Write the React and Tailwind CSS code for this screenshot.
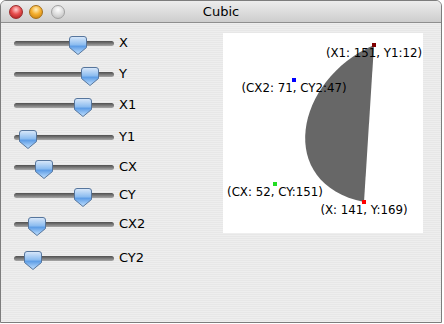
const sliders = [
  { label: "X", pos: 77, mt: "mt-[13px]" },
  { label: "Y", pos: 89, mt: "mt-[13px]" },
  { label: "X1", pos: 82, mt: "mt-[13px]" },
  { label: "Y1", pos: 27, mt: "mt-[14px]" },
  { label: "CX", pos: 43, mt: "mt-[12px]" },
  { label: "CY", pos: 82, mt: "mt-[10px]" },
  { label: "CX2", pos: 36, mt: "mt-[11px]" },
  { label: "CY2", pos: 32, mt: "mt-[16px]" },
]

const points = [
  { x: 141, y: 169, color: "#ff0000", text: "(X: 141, Y:169)" },
  { x: 151, y: 12, color: "#800000", text: "(X1: 151, Y1:12)" },
  { x: 52, y: 151, color: "#22dd22", text: "(CX: 52, CY:151)" },
  { x: 71, y: 47, color: "#0000ff", text: "(CX2: 71, CY2:47)" },
]

// pos is the thumb centre in window pixels; the track starts at x=13
function Thumb({ pos }) {
  return (
    <svg
      width="18"
      height="19"
      viewBox="0 0 18 19"
      className="absolute top-0"
      style={{ left: pos - 13 - 9 }}
    >
      <defs>
        <linearGradient id="aqua" x1="0" y1="0" x2="0" y2="1">
          <stop offset="0" stopColor="#dbe9fa" />
          <stop offset="0.45" stopColor="#8dbdf0" />
          <stop offset="0.55" stopColor="#5f9ee6" />
          <stop offset="1" stopColor="#c4e2ff" />
        </linearGradient>
      </defs>
      <path
        d="M3 0.5 H15 Q17.5 0.5 17.5 3 V11.5 L9 18.5 L0.5 11.5 V3 Q0.5 0.5 3 0.5 Z"
        fill="url(#aqua)"
        stroke="#56759c"
        strokeWidth="1"
      />
    </svg>
  )
}

function SliderRow({ label, pos, mt }) {
  return (
    <div className={`flex items-start h-[18px] ${mt}`}>
      <div className="relative w-[100px] h-[18px] ml-[13px]">
        <div className="absolute left-0 right-0 top-[5px] h-[5px] rounded-full bg-gradient-to-b from-[#4f4f4f] to-[#a8a8a8]" />
        <Thumb pos={pos} />
      </div>
      <span className="ml-[5px] leading-[14px] text-[13px] text-black">{label}</span>
    </div>
  )
}

export default function App() {
  return (
    <div className="w-[444px] h-[324px] bg-white" style={{ fontFamily: '"DejaVu Sans", "Liberation Sans", sans-serif' }}>
      <div className="w-[442px] h-[323px] border border-[#7d7d7d] rounded-t-[6px] overflow-hidden flex flex-col bg-[repeating-linear-gradient(0deg,#eeeeee_0px,#eeeeee_1px,#e7e7e7_1px,#e7e7e7_2px)]">
        <div className="relative h-[22px] shrink-0 flex items-center justify-center bg-gradient-to-b from-[#ededed] to-[#cdcdcd] border-b border-[#8f8f8f]">
          <div className="absolute left-[8px] top-[4px] flex gap-[6px]">
            <div className="w-[14px] h-[14px] rounded-full border border-[#9a2b2b] bg-[radial-gradient(circle_at_50%_30%,#ffd0d0_0%,#e85050_45%,#a01818_100%)]" />
            <div className="w-[14px] h-[14px] rounded-full border border-[#a5701a] bg-[radial-gradient(circle_at_50%_30%,#fff0c0_0%,#f5b030_45%,#c07808_100%)]" />
            <div className="w-[14px] h-[14px] rounded-full border border-[#a0a0a0] ml-[2px] bg-[radial-gradient(circle_at_50%_30%,#ffffff_0%,#dcdcdc_50%,#b8b8b8_100%)]" />
          </div>
          <span className="text-[13px] text-black">Cubic</span>
        </div>
        <div className="flex flex-1">
          <div className="w-[222px] flex flex-col">
            {sliders.map((s) => (
              <SliderRow key={s.label} {...s} />
            ))}
          </div>
          <div className="mt-[10px]">
            <svg width="200" height="200" className="bg-white block">
              <path d="M141 169 C52 151 71 47 151 12 Z" fill="#676767" />
              {points.map((p) => (
                <g key={p.text}>
                  <rect x={p.x - 2} y={p.y - 2} width="4" height="4" fill={p.color} />
                  <text
                    x={p.x}
                    y={p.y + 12}
                    textAnchor="middle"
                    fontSize="11.8"
                    fill="#000"
                  >
                    {p.text}
                  </text>
                </g>
              ))}
            </svg>
          </div>
        </div>
      </div>
    </div>
  )
}
